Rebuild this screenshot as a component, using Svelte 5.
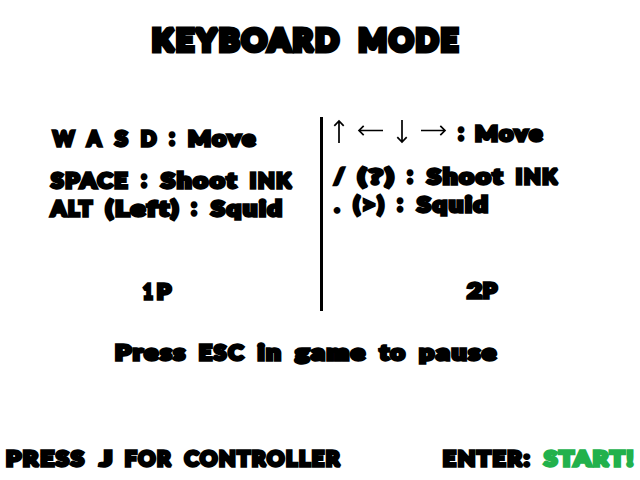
<script>
  const ctx = document.createElement('canvas').getContext('2d');
  const family = 'Lato, "Open Sans", sans-serif';

  // Fit each word's ink to its span: [text, left, right, optional class]
  function fit([text, left, right, tone = ''], size, stroke) {
    const spacing = text.length > 1 ? stroke * 0.5 : 0;
    // Measure at a large size so that rounding does not squeeze narrow glyphs
    ctx.font = `900 ${size * 20}px ${family}`;
    const m = ctx.measureText(text);
    const bearing = m.actualBoundingBoxLeft / 20;
    const ink = m.actualBoundingBoxRight / 20 + bearing + spacing * (text.length - 1);
    const scale = (right - left) / (ink + stroke);
    const x = left + (bearing + stroke / 2) * scale;
    const colon = text === ':';
    const y = 20 - stroke / 2 + (colon ? -0.7 : 0.5);
    return { text, tone, spacing, transform: `translate(${x} ${y}) scale(${scale} ${colon ? 1.05 : 1})` };
  }

  const title = [['KEYBOARD', 151.5, 340.5], ['MODE', 358, 459.5]];
  const moveOne = [['W', 51.5, 76], ['A', 85.5, 103], ['S', 113.5, 129], ['D', 140.5, 157.5], [':', 168.5, 175.5], ['Move', 187.5, 256.5]];
  const shootOne = [['SPACE', 49.5, 128.5], [':', 140.5, 147.5], ['Shoot', 159.5, 238], ['INK', 249.5, 293.5]];
  const squidOne = [['ALT', 49, 93.5], ['(Left)', 104.5, 179], [':', 190.5, 197.5], ['Squid', 209.5, 282.5]];
  const playerOne = [['1', 142.5, 153.5], ['P', 156.5, 172.5]];
  const moveTwo = [[':', 134.5, 141.5], ['Move', 151.5, 220.5]];
  const shootTwo = [['/', 9.5, 22.5], ['(?)', 33.5, 72], [':', 83.5, 90.5], ['Shoot', 102.5, 181], ['INK', 192.5, 236.5]];
  const squidTwo = [['.', 10.5, 17.5], ['(>)', 29.5, 62], [':', 73.5, 80.5], ['Squid', 92.5, 165.5]];
  const playerTwo = [['2', 143, 160], ['P', 159.5, 175.5]];
  const pause = [['Press', 114.5, 186.5], ['ESC', 198.5, 245], ['in', 256.5, 281.5], ['game', 293.5, 366.5], ['to', 377.5, 406.5], ['pause', 418.5, 497.5]];
  const controller = [['PRESS', 5.5, 85.5], ['J', 97.5, 113], ['FOR', 124.5, 172.5], ['CONTROLLER', 183.5, 341.5]];
  const start = [['ENTER:', 2.5, 90.5], ['START!', 102.5, 194, 'green']];
</script>

{#snippet line(words, cls = '', size = 21, stroke = 3.3)}
  <svg class="line {cls}" style:font-size="{size}px" stroke-width={stroke}>
    {#each words as word}
      {@const w = fit(word, size, stroke)}
      <text class={w.tone} style:letter-spacing="{w.spacing}px" transform={w.transform}>{w.text}</text>
    {/each}
    {#if cls === 'arrows'}
      <g class="keys">
        <path d="M16 21V-1M11.3 3.8L16-1L20.7 3.8" />
        <path d="M60 8.5H36M40.7 3.8L36 8.5L40.7 13.2" />
        <path d="M79-2V20M74.3 15.2L79 20L83.7 15.2" />
        <path d="M98 8.5H122M117.3 3.8L122 8.5L117.3 13.2" />
      </g>
    {/if}
  </svg>
{/snippet}

<main>
  <header>{@render line(title, '', 30.5, 4.9)}</header>
  <section class="players">
    <div class="player one">
      {@render line(moveOne)}
      {@render line(shootOne, 'shoot')}
      {@render line(squidOne)}
      {@render line(playerOne, 'name')}
    </div>
    <div class="divider"></div>
    <div class="player two">
      {@render line(moveTwo, 'arrows')}
      {@render line(shootTwo, 'shoot')}
      {@render line(squidTwo)}
      {@render line(playerTwo, 'name')}
    </div>
  </section>
  <div class="pause">{@render line(pause)}</div>
  <footer>
    <div class="controller">{@render line(controller)}</div>
    <div class="start">{@render line(start)}</div>
  </footer>
</main>

<style>
  :global(body) { margin: 0; background: #fff; }
  main {
    width: 640px;
    height: 480px;
    box-sizing: border-box;
    padding-top: 33px;
    overflow: hidden;
    background: #fff;
  }
  header { height: 84px; }
  .players { display: flex; height: 194px; }
  .player { display: flex; flex-direction: column; box-sizing: border-box; }
  .one { width: 320px; padding-top: 10px; }
  .two { width: 317px; padding-top: 5px; }
  .divider { width: 3px; background: #000; }
  .line {
    display: block;
    width: 100%;
    height: 28px;
    flex: none;
    overflow: visible;
    fill: #000;
    stroke: #000;
    stroke-linejoin: miter;
    stroke-miterlimit: 2;
    font-family: Lato, "Open Sans", sans-serif;
    font-weight: 900;
  }
  .shoot { margin-top: 14px; }
  .two .shoot { margin-top: 15px; }
  .name { margin-top: 55px; }
  .two .name { margin-top: 58px; }
  .green { fill: #22b14c; stroke: #22b14c; }
  .keys { fill: none; stroke-width: 1.7; }
  .pause { padding-top: 30px; height: 76px; }
  footer { display: flex; padding-top: 30px; }
  .controller { width: 440px; }
  .start { width: 200px; }
</style>
